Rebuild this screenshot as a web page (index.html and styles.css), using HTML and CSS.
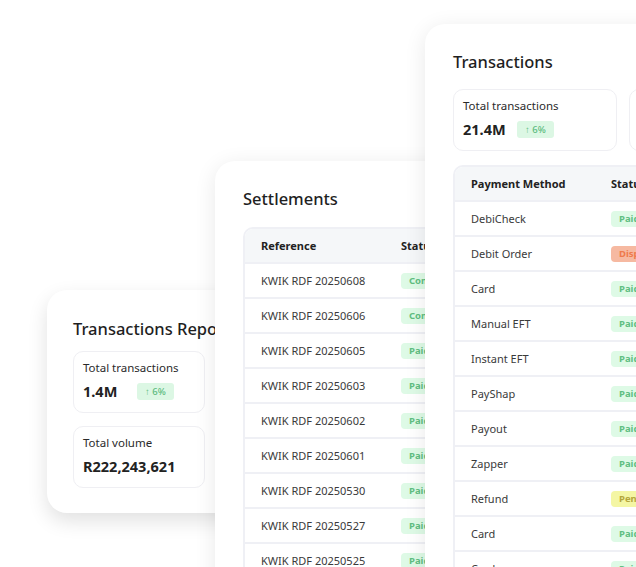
FILE: index.html
```html
<!DOCTYPE html>
<html lang="en">
<head>
  <meta charset="UTF-8">
  <title>Transactions & Settlements</title>
  <link rel="stylesheet" href="styles.css">
</head>
<body>
  <div class="stage">

    <!-- report card, back -->
    <div class="card card-report">
      <h2>Transactions Report</h2>
      <div class="stat-list">
        <div class="stat">
          <div class="stat-label">Total transactions</div>
          <div class="stat-row">
            <span class="stat-value">1.4M</span>
            <span class="trend">&#8593; 6%</span>
          </div>
        </div>
        <div class="stat">
          <div class="stat-label">Total volume</div>
          <div class="stat-row">
            <span class="stat-value">R222,243,621</span>
          </div>
        </div>
      </div>
    </div>

    <!-- settlements, middle -->
    <div class="card card-settlements">
      <h2>Settlements</h2>
      <table class="data">
        <thead>
          <tr><th class="col-first">Reference</th><th>Status</th><th>Amount</th></tr>
        </thead>
        <tbody>
          <tr><td>KWIK RDF 20250608</td><td><span class="badge paid">Completed</span></td><td>R1,204,220</td></tr>
          <tr><td>KWIK RDF 20250606</td><td><span class="badge paid">Completed</span></td><td>R983,410</td></tr>
          <tr><td>KWIK RDF 20250605</td><td><span class="badge paid">Paid</span></td><td>R1,120,004</td></tr>
          <tr><td>KWIK RDF 20250603</td><td><span class="badge paid">Paid</span></td><td>R874,932</td></tr>
          <tr><td>KWIK RDF 20250602</td><td><span class="badge paid">Paid</span></td><td>R1,002,117</td></tr>
          <tr><td>KWIK RDF 20250601</td><td><span class="badge paid">Paid</span></td><td>R765,340</td></tr>
          <tr><td>KWIK RDF 20250530</td><td><span class="badge paid">Paid</span></td><td>R932,880</td></tr>
          <tr><td>KWIK RDF 20250527</td><td><span class="badge paid">Paid</span></td><td>R1,087,215</td></tr>
          <tr><td>KWIK RDF 20250525</td><td><span class="badge paid">Paid</span></td><td>R912,604</td></tr>
        </tbody>
      </table>
    </div>

    <!-- transactions, front -->
    <div class="card card-transactions">
      <h2>Transactions</h2>
      <div class="stat-grid">
        <div class="stat">
          <div class="stat-label">Total transactions</div>
          <div class="stat-row">
            <span class="stat-value">21.4M</span>
            <span class="trend">&#8593; 6%</span>
          </div>
        </div>
        <div class="stat">
          <div class="stat-label">Total volume</div>
          <div class="stat-row">
            <span class="stat-value">R3.2B</span>
          </div>
        </div>
      </div>
      <table class="data">
        <thead>
          <tr><th class="col-first">Payment Method</th><th>Status</th><th>Amount</th></tr>
        </thead>
        <tbody>
          <tr><td>DebiCheck</td><td><span class="badge paid">Paid</span></td><td>R1,250.00</td></tr>
          <tr><td>Debit Order</td><td><span class="badge disputed">Disputed</span></td><td>R899.00</td></tr>
          <tr><td>Card</td><td><span class="badge paid">Paid</span></td><td>R349.99</td></tr>
          <tr><td>Manual EFT</td><td><span class="badge paid">Paid</span></td><td>R2,400.00</td></tr>
          <tr><td>Instant EFT</td><td><span class="badge paid">Paid</span></td><td>R650.00</td></tr>
          <tr><td>PayShap</td><td><span class="badge paid">Paid</span></td><td>R120.00</td></tr>
          <tr><td>Payout</td><td><span class="badge paid">Paid</span></td><td>R5,000.00</td></tr>
          <tr><td>Zapper</td><td><span class="badge paid">Paid</span></td><td>R89.50</td></tr>
          <tr><td>Refund</td><td><span class="badge pending">Pending</span></td><td>R249.00</td></tr>
          <tr><td>Card</td><td><span class="badge paid">Paid</span></td><td>R1,099.00</td></tr>
          <tr><td>Card</td><td><span class="badge paid">Paid</span></td><td>R75.00</td></tr>
        </tbody>
      </table>
    </div>

  </div>
</body>
</html>
```

FILE: styles.css
```css
body {
  margin: 0;
  background: #fff;
  font-family: "Noto Sans", "Open Sans", Arial, sans-serif;
  color: #222;
}
.stage {
  position: relative;
  width: 636px;
  height: 567px;
  overflow: hidden;
  background: #fff;
}

/* cards sit on a free canvas and overlap each other */
.card {
  position: absolute;
  box-sizing: border-box;
  background: #fff;
  border-radius: 20px;
  padding-top: 25px;
  box-shadow: 0 4px 22px rgba(0,0,0,0.09);
}
.card h2 {
  margin: 0;
  font-size: 16.5px;
  line-height: 24px;
  font-weight: 500;
  color: #1f1f1f;
  white-space: nowrap;
}
.card-report {
  left: 47px;
  top: 290px;
  width: 240px;
  height: 223px;
  padding-left: 26px;
  padding-top: 27px;
  box-shadow: 0 8px 20px rgba(0,0,0,0.12);
  z-index: 1;
}
.card-settlements {
  left: 215px;
  top: 161px;
  width: 400px;
  height: 600px;
  padding-left: 28px;
  padding-top: 26px;
  z-index: 2;
}
.card-transactions {
  left: 425px;
  top: 24px;
  width: 396px;
  height: 700px;
  padding-left: 28px;
  padding-top: 26px;
  z-index: 3;
}

/* stat boxes */
.stat-list {
  display: flex;
  flex-direction: column;
  gap: 13px;
  margin-top: 10px;
  width: 132px;
}
.stat-grid {
  display: grid;
  grid-template-columns: 164px 164px;
  gap: 12px;
  margin-top: 15px;
}
.stat {
  box-sizing: border-box;
  height: 62px;
  padding: 8px 9px;
  border: 1px solid #efeff3;
  border-radius: 10px;
}
.stat-label {
  font-size: 11.5px;
  line-height: 16px;
  color: #2a2a2a;
  white-space: nowrap;
}
.stat-row {
  display: flex;
  align-items: center;
  gap: 9px;
  height: 24px;
  margin-top: 3px;
}
.stat-value {
  min-width: 45px;
  font-size: 14.5px;
  font-weight: 700;
  color: #222;
  white-space: nowrap;
}
.trend {
  height: 17px;
  line-height: 17px;
  padding: 0 8px;
  border-radius: 3px;
  background: #dcf7e4;
  color: #5cbb7f;
  font-size: 9.5px;
  font-weight: 500;
  white-space: nowrap;
}

/* tables */
.data {
  width: 340px;
  border-collapse: separate;
  border-spacing: 0;
  border: 2px solid #eff0f5;
  border-radius: 10px;
  table-layout: fixed;
  font-size: 11px;
}
.card-settlements .data {
  margin-top: 16px;
}
.card-transactions .data {
  margin-top: 14px;
}
.data th,
.data td {
  height: 33px;
  padding: 0 0 0 16px;
  text-align: left;
  white-space: nowrap;
  overflow: hidden;
  border-bottom: 2px solid #eff0f5;
}
.data th {
  background: #f5f7f9;
  font-weight: 700;
  color: #222;
}
.data th:first-child {
  border-top-left-radius: 8px;
}
.data td {
  color: #3a3a3a;
}
.data th:nth-child(2),
.data td:nth-child(2) {
  padding-left: 0;
}
.col-first {
  width: 140px;
}
.badge {
  display: inline-block;
  height: 16px;
  line-height: 16px;
  padding: 0 8px;
  border-radius: 4px;
  font-size: 9.5px;
  font-weight: 700;
}
.paid {
  background: #defae6;
  color: #61bf82;
}
.disputed {
  background: #f6b9a1;
  color: #ef7a4c;
}
.pending {
  background: #f4f6a4;
  color: #b4a63c;
}
```
